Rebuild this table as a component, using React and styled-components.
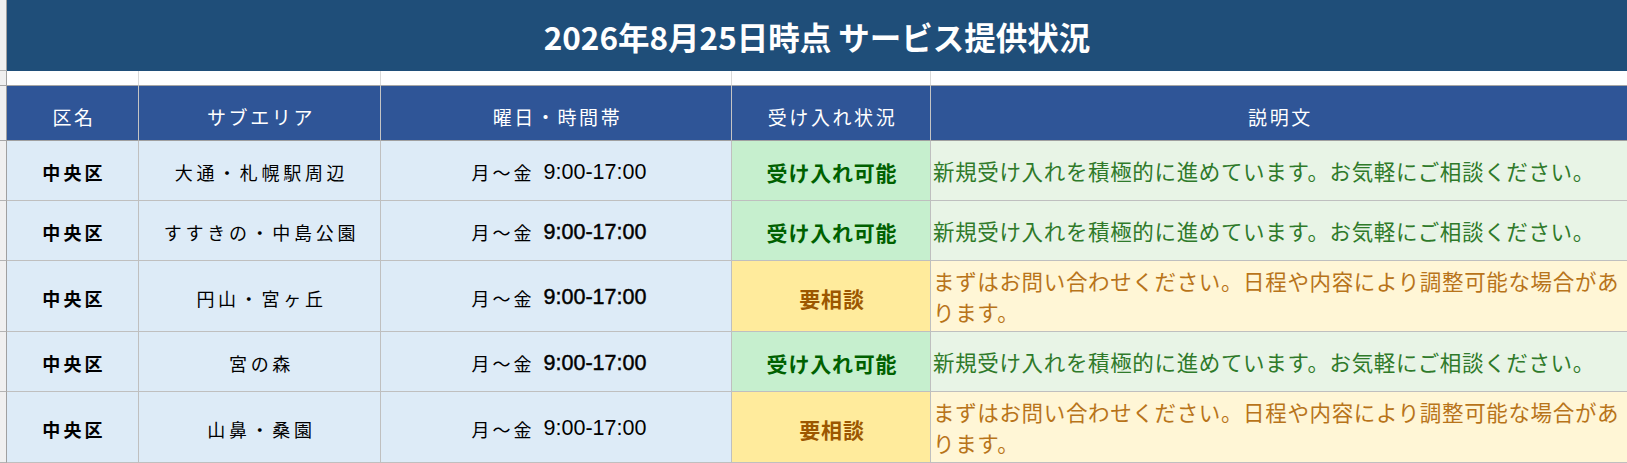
import React from "react"
import styled, { createGlobalStyle } from "styled-components"

const GlobalStyle = createGlobalStyle`
html, body {
  margin: 0;
  padding: 0;
  background: #ffffff;
  overflow: hidden;
}
body {
  font-family: "Noto Sans CJK JP", "Noto Sans", sans-serif;
}
`

const notes = {
  ok: "新規受け入れを積極的に進めています。お気軽にご相談ください。",
  ask: "まずはお問い合わせください。日程や内容により調整可能な場合があります。",
}

const statusText = {
  ok: "受け入れ可能",
  ask: "要相談",
}

const rows = [
  { id: 1, ward: "中央区", area: "大通・札幌駅周辺", heavy: false, status: "ok" },
  { id: 2, ward: "中央区", area: "すすきの・中島公園", heavy: true, status: "ok" },
  { id: 3, ward: "中央区", area: "円山・宮ヶ丘", heavy: true, status: "ask" },
  { id: 4, ward: "中央区", area: "宮の森", heavy: true, status: "ok" },
  { id: 5, ward: "中央区", area: "山鼻・桑園", heavy: false, status: "ask" },
]

const headers = ["区名", "サブエリア", "曜日・時間帯", "受け入れ状況", "説明文"]

const App = () => {
  return (
    <>
      <GlobalStyle />
      <Sheet>
        <RowStub $h={71} />
        <Title>2026年8月25日時点 サービス提供状況</Title>

        <RowStub $h={15} $line="#a6a6a6" />
        {headers.map((h, i) => (
          <Blank key={h} $last={i === headers.length - 1} />
        ))}

        <RowStub $h={55} $line="#a6a6a6" />
        {headers.map((h, i) => (
          <HeadCell key={h} $last={i === headers.length - 1}>
            {h}
          </HeadCell>
        ))}

        {rows.map((r) => {
          const tall = r.status === "ask"
          return (
            <React.Fragment key={r.id}>
              <RowStub $h={tall ? 71 : 60} />
              <WardCell>{r.ward}</WardCell>
              <AreaCell>{r.area}</AreaCell>
              <HoursCell>
                <Days>月〜金</Days>
                <Time $heavy={r.heavy}>9:00-17:00</Time>
              </HoursCell>
              <StatusCell $status={r.status}>{statusText[r.status]}</StatusCell>
              <NoteCell $status={r.status}>{notes[r.status]}</NoteCell>
            </React.Fragment>
          )
        })}
      </Sheet>
    </>
  )
}

export default App

const Sheet = styled.div`
width: 1627px;
display: grid;
grid-template-columns: 7px 132px 242px 351px 199px 696px;
`
const RowStub = styled.div`
box-sizing: border-box;
height: ${(p) => p.$h}px;
background-color: #f0f0f0;
border-right: 1px solid #a0a0a0;
border-bottom: 1px solid ${(p) => p.$line || "#b4b4b4"};
`
const Title = styled.div`
grid-column: span 5;
display: flex;
justify-content: center;
align-items: center;
background-color: #1f4e79;
color: #ffffff;
font-size: 31.5px;
font-weight: 700;
`
const Blank = styled.div`
box-sizing: border-box;
background-color: #ffffff;
border-right: ${(p) => (p.$last ? "none" : "1px solid #d9d9d9")};
border-bottom: 1px solid #a6a6a6;
`
const HeadCell = styled.div`
box-sizing: border-box;
display: flex;
justify-content: center;
align-items: center;
padding: 6px 0 0 3px;
background-color: #2f5597;
color: #ffffff;
font-size: 19px;
letter-spacing: 2.6px;
border-right: ${(p) => (p.$last ? "none" : "1px solid #c4c4c4")};
border-bottom: 1px solid #a0a0a0;
`
const BodyCell = styled.div`
box-sizing: border-box;
display: flex;
align-items: center;
justify-content: center;
padding-top: 3px;
border-right: 1px solid #bfbfbf;
border-bottom: 1px solid #bfbfbf;
background-color: #ddebf7;
color: #000000;
`
const WardCell = styled(BodyCell)`
font-size: 18px;
font-weight: 700;
letter-spacing: 3.2px;
padding-left: 3px;
`
const AreaCell = styled(BodyCell)`
font-size: 18px;
letter-spacing: 3.7px;
padding-left: 4px;
`
const HoursCell = styled(BodyCell)`
gap: 9px;
padding-left: 6px;
`
const Days = styled.span`
font-size: 18px;
letter-spacing: 3px;
`
const Time = styled.span`
font-family: "Liberation Sans", Arial, sans-serif;
font-size: 21.5px;
-webkit-text-stroke: ${(p) => (p.$heavy ? "0.45px #000" : "0")};
`
const StatusCell = styled(BodyCell)`
font-size: 21px;
font-weight: 700;
letter-spacing: 0.8px;
padding-left: 2px;
background-color: ${(p) => (p.$status === "ok" ? "#c6efce" : "#ffeb9c")};
color: ${(p) => (p.$status === "ok" ? "#006100" : "#9c5700")};
`
const NoteCell = styled(BodyCell)`
justify-content: flex-start;
padding: 0 0 0 2px;
border-right: none;
font-size: 21.5px;
letter-spacing: 0.65px;
line-height: 31px;
background-color: ${(p) => (p.$status === "ok" ? "#e8f4e6" : "#fff6d6")};
color: ${(p) => (p.$status === "ok" ? "#2f7a2a" : "#b8741a")};
`
